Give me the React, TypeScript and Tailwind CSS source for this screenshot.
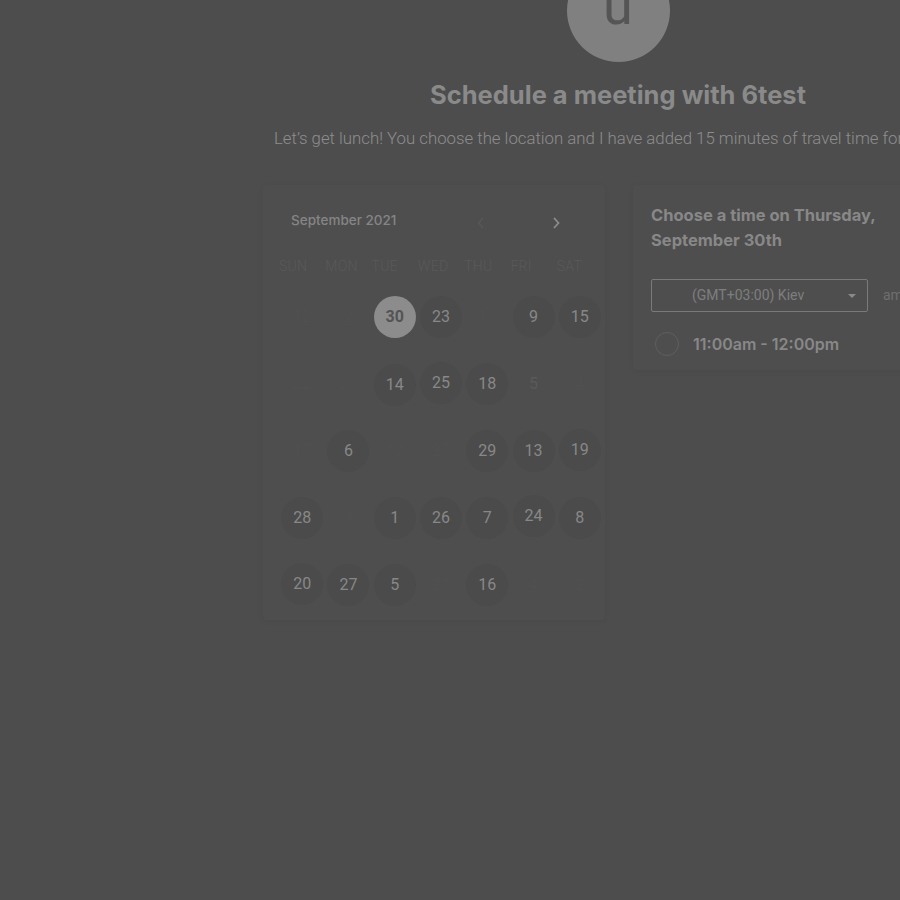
import React from "react";

type Day = { n: string; kind: "on" | "off" | "dim" | "sel"; dy?: number };

const weeks: Day[][] = [
  [
    { n: "12", kind: "off" },
    { n: "2", kind: "off" },
    { n: "30", kind: "sel" },
    { n: "23", kind: "on" },
    { n: "11", kind: "off" },
    { n: "9", kind: "on" },
    { n: "15", kind: "on" },
  ],
  [
    { n: "22", kind: "off" },
    { n: "21", kind: "off" },
    { n: "14", kind: "on", dy: 1 },
    { n: "25", kind: "on", dy: -1 },
    { n: "18", kind: "on" },
    { n: "5", kind: "dim" },
    { n: "4", kind: "off" },
  ],
  [
    { n: "17", kind: "off" },
    { n: "6", kind: "on" },
    { n: "10", kind: "off" },
    { n: "27", kind: "off" },
    { n: "29", kind: "on" },
    { n: "13", kind: "on" },
    { n: "19", kind: "on", dy: -1 },
  ],
  [
    { n: "28", kind: "on" },
    { n: "3", kind: "off" },
    { n: "1", kind: "on" },
    { n: "26", kind: "on" },
    { n: "7", kind: "on" },
    { n: "24", kind: "on", dy: -2 },
    { n: "8", kind: "on" },
  ],
  [
    { n: "20", kind: "on", dy: -1 },
    { n: "27", kind: "on" },
    { n: "5", kind: "on" },
    { n: "21", kind: "off" },
    { n: "16", kind: "on" },
    { n: "4", kind: "off" },
    { n: "2", kind: "off" },
  ],
];

const weekdays = ["SUN", "MON", "TUE", "WED", "THU", "FRI", "SAT"];

function DayCell({ day }: { day: Day }) {
  if (day.kind === "sel") {
    return (
      <div className="flex h-[67px] items-center justify-center">
        <div className="flex h-[42px] w-[42px] items-center justify-center rounded-full bg-[#8c8c8c] text-[16px] font-bold text-[#545454]">
          {day.n}
        </div>
      </div>
    );
  }
  if (day.kind === "on") {
    return (
      <div className="flex h-[67px] items-center justify-center">
        <div
          className="flex h-[42px] w-[42px] items-center justify-center rounded-full bg-[#4b4b4b] text-[16px] text-[#888888]"
          style={{ marginTop: (day.dy ?? 0) * 2 }}
        >
          {day.n}
        </div>
      </div>
    );
  }
  return (
    <div className="flex h-[67px] items-center justify-center">
      <span
        className={
          day.kind === "dim"
            ? "text-[16px] text-[#5a5a5a]"
            : "text-[16px] text-[#505050]"
        }
      >
        {day.n}
      </span>
    </div>
  );
}

function Calendar() {
  return (
    <div className="w-[342px] rounded-[4px] bg-[#4e4e4e] pb-[2px] pl-[16px] pt-[24px] shadow-[0_1px_6px_rgba(0,0,0,0.05)]">
      <div className="flex h-[22px] items-center">
        <span className="ml-[12px] text-[13.5px] font-medium text-[#858585] [font-family:Inter,sans-serif]">
          September 2021
        </span>
        <span className="ml-[80px] text-[#575757]">
          <svg width="10" height="16" viewBox="0 0 10 16" className="mt-[6px]">
            <path d="M7 3 L2.5 8 L7 13" stroke="currentColor" strokeWidth="1.6" fill="none" />
          </svg>
        </span>
        <span className="ml-[65px] text-[#8c8c8c]">
          <svg width="10" height="16" viewBox="0 0 10 16" className="mt-[6px]">
            <path d="M3 3 L7.5 8 L3 13" stroke="currentColor" strokeWidth="1.8" fill="none" />
          </svg>
        </span>
      </div>
      <div className="mt-[25px] grid w-[324px] grid-cols-7">
        {weekdays.map((w) => (
          <span key={w} className="text-[14px] font-light tracking-[0.3px] text-[#595959]">
            {w}
          </span>
        ))}
      </div>
      <div className="mt-[6px] grid w-[324px] grid-cols-7 [font-family:Roboto,sans-serif]">
        {weeks.flat().map((d, i) => (
          <DayCell key={i} day={d} />
        ))}
      </div>
    </div>
  );
}

function TimePanel() {
  return (
    <div className="w-[340px] self-start rounded-[4px] bg-[#4e4e4e] pb-[14px] pl-[18px] pt-[18px] shadow-[0_1px_6px_rgba(0,0,0,0.05)]">
      <h2 className="w-[240px] text-[16.5px] font-bold leading-[25px] text-[#888888] [font-family:Inter,sans-serif]">
        Choose a time on Thursday, September 30th
      </h2>
      <div className="mt-[26px] flex items-center">
        <div className="relative flex h-[33px] w-[217px] items-center rounded-[2px] border border-[#7a7a7a] pl-[40px]">
          <span className="text-[14px] text-[#7e7e7e]">(GMT+03:00) Kiev</span>
          <svg width="8" height="4" viewBox="0 0 8 4" className="absolute right-[11px] top-[14px]">
            <path d="M0 0 L8 0 L4 4 Z" fill="#8a8a8a" />
          </svg>
        </div>
        <span className="ml-[15px] text-[14px] text-[#6e6e6e]">am/pm</span>
      </div>
      <div className="mt-[20px] flex items-center">
        <div className="ml-[4px] h-[24px] w-[24px] rounded-full border border-[#5f5f5f]" />
        <span className="ml-[14px] text-[16px] font-semibold text-[#888888] [font-family:Inter,sans-serif]">
          11:00am - 12:00pm
        </span>
      </div>
    </div>
  );
}

export default function App() {
  return (
    <div className="h-[900px] w-[900px] overflow-hidden bg-[#4d4d4d] [font-family:Roboto,sans-serif]">
      <div className="flex w-[1236px] flex-col items-center">
        <div className="mt-[-41px] flex h-[103px] w-[103px] items-start justify-center rounded-full bg-[#808080]">
          <span className="mt-[17px] text-[54px] leading-[60px] text-[#555555]">u</span>
        </div>
        <h1 className="mt-[17px] text-[25.5px] font-bold leading-[32px] text-[#8a8a8a] [font-family:Inter,sans-serif]">
          Schedule a meeting with 6test
        </h1>
        <p className="ml-[274px] mt-[15px] self-start whitespace-nowrap text-[16.8px] font-light text-[#8d8d8d]">
          Let’s get lunch! You choose the location and I have added 15 minutes of travel time for you to get there.
        </p>
        <div className="mt-[34px] flex gap-[28px]">
          <Calendar />
          <TimePanel />
        </div>
      </div>
    </div>
  );
}
